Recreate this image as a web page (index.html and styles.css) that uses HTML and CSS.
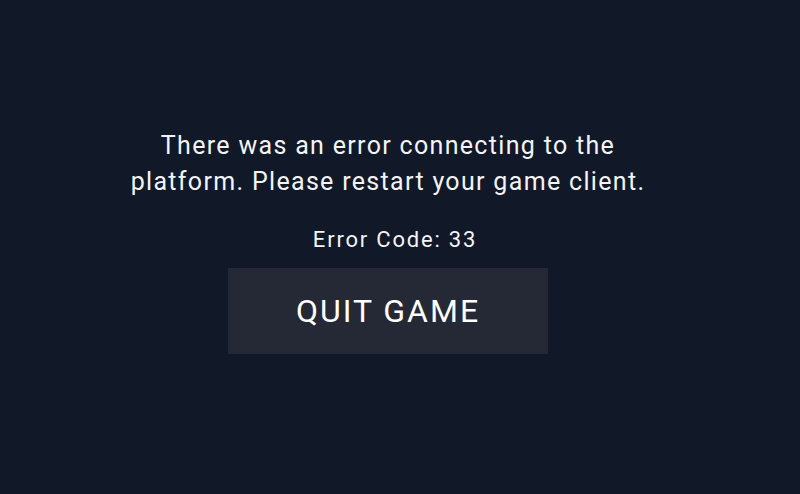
FILE: index.html
```html
<!DOCTYPE html>
<html lang="en">
<head>
    <meta charset="UTF-8">
    <meta name="viewport" content="width=device-width, initial-scale=1.0">
    <title>Connection Error</title>
    <link rel="stylesheet" href="styles.css">
</head>
<body>
    <div class="error-screen">
        <p class="message">There was an error connecting to the platform. Please restart your game client.</p>
        <p class="code">Error Code: 33</p>
        <button class="quit-button">QUIT GAME</button>
    </div>
</body>
</html>
```

FILE: styles.css
```css
body {
    font-family: Roboto, 'DejaVu Sans', sans-serif;
    background-color: #111827;
    color: #f3f4f6;
    margin: 0;
    padding: 0 24px 12px 0;
    display: flex;
    justify-content: center;
    align-items: center;
    min-height: 100vh;
    box-sizing: border-box;
}
.error-screen {
    display: flex;
    flex-direction: column;
    align-items: center;
    text-align: center;
}
.message {
    font-size: 25px;
    line-height: 36px;
    letter-spacing: 1.32px;
    max-width: 530px;
    margin: 0 0 28px;
}
.code {
    font-size: 22px;
    line-height: 24px;
    letter-spacing: 1.8px;
    margin: 0 0 16px 14px;
}
.quit-button {
    font-family: inherit;
    width: 320px;
    height: 86px;
    background-color: #252935;
    color: #ffffff;
    border: none;
    font-size: 32px;
    letter-spacing: 2px;
    cursor: pointer;
}
```
